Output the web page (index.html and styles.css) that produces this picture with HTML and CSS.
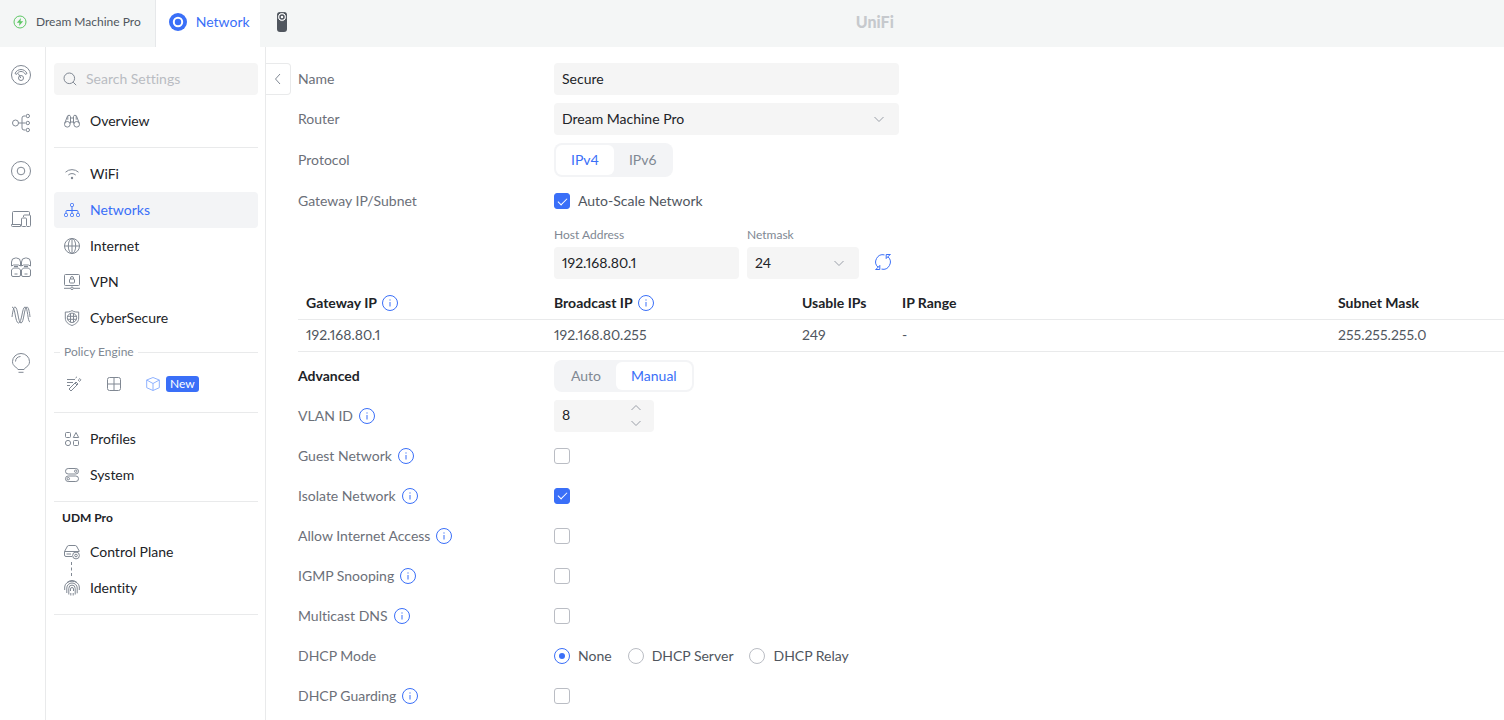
FILE: index.html
```
<!DOCTYPE html>
<html lang="en">
  <head>
    <meta charset="utf-8">
    <title>UniFi Network</title>
    <link rel="stylesheet" href="styles.css">
  </head>
  <body>
    <svg class="sprite" aria-hidden="true">
      <symbol id="info" viewBox="0 0 16 16">
        <circle cx="8" cy="8" r="7.5"/>
        <path d="M8 7v4.5M8 4.4v1.2"/>
      </symbol>
      <symbol id="chevron" viewBox="0 0 12 12">
        <path d="M1.5 4 6 8.5 10.5 4"/>
      </symbol>
    </svg>

    <header class="topbar">
      <a class="tab" href="#">
        <svg class="tab-status" viewBox="0 0 14 14">
          <circle cx="7" cy="7" r="6"/>
          <path class="solid" d="M8 3 3.8 7.7h2.7L6 11l4.2-4.700H7.5z"/>
        </svg>
        Dream Machine Pro
      </a>
      <a class="tab tab-active" href="#">
        <svg class="tab-network" viewBox="0 0 18 18">
          <circle class="disc" cx="9" cy="9" r="9"/>
          <circle class="ring" cx="9" cy="9" r="4.2"/>
        </svg>
        Network
      </a>
      <a class="tab tab-protect" href="#" aria-label="Protect">
        <svg class="camera" viewBox="0 0 10 20">
          <rect width="10" height="20" rx="3"/>
          <circle class="lens" cx="5" cy="5" r="4.4"/>
          <circle class="lens-ring" cx="5" cy="5" r="2"/>
        </svg>
      </a>
      <div class="brand">UniFi</div>
    </header>

    <div class="layout">
      <nav class="rail">
        <a href="#" aria-label="Dashboard">
          <svg viewBox="0 0 20 20">
            <circle cx="10" cy="10" r="9.5"/>
            <path d="M4 8.500c2.300-5.300 9.700-5.300 12 0l-1.600.9c-1.900-3.900-6.900-3.900-8.800 0z"/>
            <circle cx="10" cy="13" r="2.500"/>
            <path d="M9.800 13 7.200 8.500"/>
          </svg>
        </a>
        <a href="#" aria-label="Topology">
          <svg viewBox="0 0 20 20">
            <circle cx="4.5" cy="10" r="3"/>
            <path d="M7.500 10h7M14.500 3H13a2 2 0 0 0-2 2v10a2 2 0 0 0 2 2h1.500"/>
            <circle cx="16.800" cy="3" r="1.700"/>
            <circle cx="16.800" cy="10" r="1.700"/>
            <circle cx="16.800" cy="17" r="1.700"/>
          </svg>
        </a>
        <a href="#" aria-label="Devices">
          <svg viewBox="0 0 20 20">
            <circle cx="10" cy="10" r="9.5"/>
            <circle cx="10" cy="10" r="3.8"/>
          </svg>
        </a>
        <a href="#" aria-label="Clients">
          <svg viewBox="0 0 20 20">
            <path d="M1.500 15V3.500a1 1 0 0 1 1-1h15a1 1 0 0 1 1 1V6M.5 15.500h9v2h-8a1 1 0 0 1-1-1zM12.500 8V7a1 1 0 0 1 1-1h5a1 1 0 0 1 1 1v9.500a1 1 0 0 1-1 1H16"/>
            <rect x="10.5" y="9" width="5" height="8.5" rx="1"/>
          </svg>
        </a>
        <a href="#" aria-label="Ports">
          <svg viewBox="0 0 20 20">
            <path d="M.5 9V5a4 4 0 0 1 4-4h1a4 4 0 0 1 4 4v4L7.500 8h-5zM10.500 9V5a4 4 0 0 1 4-4h1a4 4 0 0 1 4 4v4l-2-1h-5zM.5 18V13l2-2h5l2 2v5a1.500 1.500 0 0 1-1.500 1.500H2A1.500 1.500 0 0 1 .5 18zM10.500 18v-5l2-2h5l2 2v5a1.500 1.500 0 0 1-1.500 1.500h-6a1.500 1.500 0 0 1-1.500-1.500z"/>
            <path d="M3 9.500h4M13 9.500h4M3.500 17h3M13.500 17h3"/>
          </svg>
        </a>
        <a href="#" aria-label="Radios">
          <svg viewBox="0 0 20 20">
            <path d="M1 12C2 4 3 2 4 2c3 0 3 16 6 16s3-16 6-16c1.500 0 2.500 5 3 10"/>
            <path d="M1 2c3.500 0 3 16 6.500 16S11 2 14 2s2.500 15 5 15"/>
          </svg>
        </a>
        <a href="#" aria-label="Insights">
          <svg viewBox="0 0 20 20">
            <path d="M7 16.500C6.500 14.500 1.500 13.500 1.500 8.700a8.500 8.200 0 0 1 17 0c0 4.800-5 5.800-5.500 7.800zM7.500 19.300h5M4.500 8.500A5.500 5.300 0 0 1 9.500 3.500"/>
          </svg>
        </a>
      </nav>

      <aside class="sidebar">
        <label class="search">
          <svg viewBox="0 0 14 14">
            <circle cx="6.300" cy="6.300" r="5.300"/>
            <path d="m10.200 10.200 3 3"/>
          </svg>
          <input type="search" placeholder="Search Settings" aria-label="Search Settings">
        </label>

        <nav class="menu">
          <a class="menu-item" href="#">
            <svg viewBox="0 0 16 16">
              <circle cx="3.300" cy="11.300" r="2.800"/>
              <circle cx="12.700" cy="11.300" r="2.800"/>
              <path d="M.7 10.300 3.300 3.600C3.700 1.800 6.500 1.800 6.500 3.600v6.900M15.300 10.300 12.700 3.600c-.4-1.800-3.200-1.800-3.200 0v6.900M6.500 5h3M6.500 9h3M3.800 2.700v4M12.200 2.700v4"/>
            </svg>
            Overview
          </a>
        </nav>
        <hr>
        <nav class="menu">
          <a class="menu-item" href="#">
            <svg viewBox="0 0 16 16">
              <path d="M1.500 6.200a9.500 9.500 0 0 1 13 0M4.300 9a5.500 5.500 0 0 1 7.400 0"/>
              <circle class="solid" cx="8" cy="12" r="1.200"/>
            </svg>
            WiFi
          </a>
          <a class="menu-item menu-item-active" href="#">
            <svg viewBox="0 0 16 16">
              <rect x="6.500" y="1.500" width="3" height="3" rx="1"/>
              <rect x=".5" y="11.500" width="3" height="3" rx="1"/>
              <rect x="6.500" y="11.500" width="3" height="3" rx="1"/>
              <rect x="12.500" y="11.500" width="3" height="3" rx="1"/>
              <path d="M8 4.500v7M2 11.500v-2a1 1 0 0 1 1-1h10a1 1 0 0 1 1 1v2"/>
            </svg>
            Networks
          </a>
          <a class="menu-item" href="#">
            <svg viewBox="0 0 16 16">
              <circle cx="8" cy="8" r="7.5"/>
              <ellipse cx="8" cy="8" rx="3.700" ry="7.500"/>
              <path d="M8 .5v15M.5 8h15"/>
            </svg>
            Internet
          </a>
          <a class="menu-item" href="#">
            <svg viewBox="0 0 16 16">
              <rect x=".5" y=".5" width="15" height="11" rx="1"/>
              <rect x="5.500" y="5" width="5" height="4" rx="1"/>
              <path d="M6.500 5V4a1.500 1.500 0 0 1 3 0v1M0 14.300h6.500M9.500 14.300H16"/>
              <circle cx="8" cy="14.300" r="1.300"/>
            </svg>
            VPN
          </a>
          <a class="menu-item" href="#">
            <svg viewBox="0 0 16 16">
              <path d="M8 .6c2 1.300 4.500 1.700 6.700 1.400V8c0 4-3 6.200-6.700 7.500C4.300 14.200 1.300 12 1.300 8V2C3.500 2.300 6 1.900 8 .6z"/>
              <circle cx="8" cy="7.800" r="4.700"/>
              <path d="M6.500 3.300v9M9.500 3.300v9M3.500 6.300h9M3.500 9.300h9"/>
            </svg>
            CyberSecure
          </a>
        </nav>

        <section class="policy">
          <h2 class="policy-title">Policy Engine</h2>
          <div class="policy-links">
            <a href="#" aria-label="Rules">
              <svg viewBox="0 0 16 16">
                <path d="M1 3.500h8M1 6.500h6M1 9.500h3M3 13l7-7 2 2-7 7zM9 7l2 2M9.500 2 11 .8M12.200 4.200l1.600-1.600 1.200 1.200-1.600 1.600z"/>
              </svg>
            </a>
            <a href="#" aria-label="Zones">
              <svg viewBox="0 0 16 16">
                <rect x="1.500" y="1.500" width="13" height="13" rx="2"/>
                <path d="M8 1.500v13M1.500 8h13"/>
              </svg>
            </a>
            <a class="policy-objects" href="#">
              <svg viewBox="1 1 14 14">
                <path d="M8 1.500 14.300 4v7.700L8 14.500l-6.300-2.800V4zM1.700 4 8 7.500 14.300 4M8 7.500v7"/>
              </svg>
              <span class="badge">New</span>
            </a>
          </div>
        </section>
        <hr>
        <nav class="menu">
          <a class="menu-item" href="#">
            <svg viewBox="0 0 16 16">
              <rect x="1.500" y="1.500" width="5" height="5" rx="1"/>
              <path d="m12 1.500 2.700 5H9.300z"/>
              <circle cx="4" cy="12" r="2.600"/>
              <rect x="9.500" y="9.500" width="5" height="5" rx="1"/>
            </svg>
            Profiles
          </a>
          <a class="menu-item" href="#">
            <svg viewBox="0 0 16 16">
              <rect x="1.500" y="1.500" width="13" height="5.500" rx="2.700"/>
              <rect x="1.500" y="9" width="13" height="5.500" rx="2.700"/>
              <circle cx="11.700" cy="4.200" r="1.200"/>
              <circle cx="4.300" cy="11.700" r="1.200"/>
            </svg>
            System
          </a>
        </nav>
        <hr>
        <h2 class="console-title">UDM Pro</h2>
        <nav class="menu menu-linked">
          <a class="menu-item" href="#">
            <svg viewBox="0 0 16 16">
              <path d="M8 12.500H2A1.500 1.500 0 0 1 .5 11V7.500L3 3a2 2 0 0 1 1.700-1.500h6.600A2 2 0 0 1 13 3l2.500 4.500M.5 7.500H15M2.500 10H7"/>
              <circle cx="12" cy="11.500" r="3.400"/>
              <circle cx="12" cy="11.500" r="1.300"/>
            </svg>
            Control Plane
          </a>
          <a class="menu-item" href="#">
            <svg viewBox="0 0 16 16">
              <path d="M3 2.500a8 8 0 0 1 10 0M.7 10V7A7.300 5.800 0 0 1 15.300 7v3M2.800 13V8a5.200 5 0 0 1 10.400 0v5.300M4.800 14.500V8.500a3.200 3.400 0 0 1 6.400 0v6M6.800 15.500V13M9.200 15.500V13M6.500 11V9a1.500 1.500 0 0 1 3 0v2"/>
            </svg>
            Identity
          </a>
        </nav>
        <hr>
      </aside>

      <main class="content">
        <button class="collapse" type="button" aria-label="Collapse menu">
          <svg viewBox="0 0 12 12"><path d="M8 1 3.500 6 8 11"/></svg>
        </button>

        <form class="settings">
          <div class="row">
            <label class="row-label" for="name">Name</label>
            <input class="field field-wide" id="name" type="text" value="Secure">
          </div>
          <div class="row">
            <label class="row-label" for="router">Router</label>
            <div class="select field-wide">
              <select class="field" id="router">
                <option>Dream Machine Pro</option>
              </select>
              <svg class="chevron"><use href="#chevron"/></svg>
            </div>
          </div>
          <div class="row">
            <span class="row-label">Protocol</span>
            <div class="segmented segmented-tall">
              <button class="segment segment-active" type="button">IPv4</button>
              <button class="segment" type="button">IPv6</button>
            </div>
          </div>
          <div class="row">
            <span class="row-label">Gateway IP/Subnet</span>
            <label class="choice">
              <input type="checkbox" checked>
              Auto-Scale Network
            </label>
          </div>
          <div class="subnet">
            <div class="subnet-host">
              <label class="caption" for="host">Host Address</label>
              <input class="field" id="host" type="text" value="192.168.80.1">
            </div>
            <div class="subnet-mask">
              <label class="caption" for="netmask">Netmask</label>
              <div class="select">
                <select class="field" id="netmask">
                  <option>24</option>
                </select>
                <svg class="chevron"><use href="#chevron"/></svg>
              </div>
            </div>
            <button class="refresh" type="button" aria-label="Refresh">
              <svg viewBox="0 0 16 16">
                <path d="M9.500.9A7.200 7.200 0 0 0 3 13.200M.5 15.500h4.300v-4.300M4.500 11.800.8 15.500M6.500 15.100A7.200 7.200 0 0 0 13 2.800M15.500.5h-4.300v4.300M11.500 4.200 15.200.5"/>
              </svg>
            </button>
          </div>

          <table class="summary">
            <thead>
              <tr>
                <th class="col-ip">Gateway IP <svg class="info"><use href="#info"/></svg></th>
                <th class="col-ip">Broadcast IP <svg class="info"><use href="#info"/></svg></th>
                <th class="col-usable">Usable IPs</th>
                <th>IP Range</th>
                <th class="col-mask">Subnet Mask</th>
              </tr>
            </thead>
            <tbody>
              <tr>
                <td>192.168.80.1</td>
                <td>192.168.80.255</td>
                <td>249</td>
                <td>-</td>
                <td>255.255.255.0</td>
              </tr>
            </tbody>
          </table>

          <div class="row">
            <span class="row-label row-title">Advanced</span>
            <div class="segmented">
              <button class="segment" type="button">Auto</button>
              <button class="segment segment-active" type="button">Manual</button>
            </div>
          </div>
          <div class="row">
            <label class="row-label" for="vlan">VLAN ID <svg class="info"><use href="#info"/></svg></label>
            <div class="stepper">
              <input class="field" id="vlan" type="number" value="8">
              <div class="stepper-buttons">
                <button type="button" aria-label="Increase"><svg class="chevron chevron-up"><use href="#chevron"/></svg></button>
                <button type="button" aria-label="Decrease"><svg class="chevron"><use href="#chevron"/></svg></button>
              </div>
            </div>
          </div>
          <div class="row">
            <label class="row-label" for="guest">Guest Network <svg class="info"><use href="#info"/></svg></label>
            <input id="guest" type="checkbox">
          </div>
          <div class="row">
            <label class="row-label" for="isolate">Isolate Network <svg class="info"><use href="#info"/></svg></label>
            <input id="isolate" type="checkbox" checked>
          </div>
          <div class="row">
            <label class="row-label" for="internet">Allow Internet Access <svg class="info"><use href="#info"/></svg></label>
            <input id="internet" type="checkbox">
          </div>
          <div class="row">
            <label class="row-label" for="igmp">IGMP Snooping <svg class="info"><use href="#info"/></svg></label>
            <input id="igmp" type="checkbox">
          </div>
          <div class="row">
            <label class="row-label" for="mdns">Multicast DNS <svg class="info"><use href="#info"/></svg></label>
            <input id="mdns" type="checkbox">
          </div>
          <div class="row">
            <span class="row-label">DHCP Mode</span>
            <div class="choices">
              <label class="choice"><input type="radio" name="dhcp" checked> None</label>
              <label class="choice"><input type="radio" name="dhcp"> DHCP Server</label>
              <label class="choice"><input type="radio" name="dhcp"> DHCP Relay</label>
            </div>
          </div>
          <div class="row">
            <label class="row-label" for="guarding">DHCP Guarding <svg class="info"><use href="#info"/></svg></label>
            <input id="guarding" type="checkbox">
          </div>
        </form>
      </main>
    </div>
  </body>
</html>
```
FILE: styles.css
```
* {
  box-sizing: border-box;
}
body {
  margin: 0;
  min-height: 100vh;
  display: flex;
  flex-direction: column;
  font-family: Lato, "Liberation Sans", sans-serif;
  font-size: 14px;
  font-variant-ligatures: none;
  font-variant-numeric: proportional-nums;
  line-height: 20px;
  color: #212327;
  background-color: white;
}
a {
  color: inherit;
  text-decoration: none;
}
button,
input,
select {
  font: inherit;
  color: inherit;
  margin: 0;
}
button {
  padding: 0;
  border: none;
  background: none;
}
svg {
  display: block;
  flex-shrink: 0;
  fill: none;
  stroke: #808893;
}
svg .solid {
  fill: currentColor;
  stroke: none;
}
.sprite {
  position: absolute;
  width: 0;
  height: 0;
}
hr {
  width: 100%;
  margin: 8px 0;
  border: none;
  border-top: 1px solid #e9eaeb;
}

/* top bar */
.topbar {
  display: flex;
  height: 47px;
  padding-right: 58px;
  background-color: #f4f6f6;
}
.tab {
  display: flex;
  align-items: center;
  gap: 9px;
  padding: 0 14px 3px 13px;
  font-size: 12px;
  color: #50565e;
  border-right: 1px solid #e6e8ea;
}
.tab-active {
  padding: 0 10px 3px 13px;
  font-size: 14px;
  color: #3a6ff8;
  background-color: white;
  border-right: none;
}
.tab-protect {
  padding: 0 17px 3px;
  border-right: none;
}
.tab-status {
  width: 14px;
  height: 14px;
  color: #5cc763;
  stroke: #5cc763;
}
.tab-network {
  width: 18px;
  height: 18px;
}
.disc {
  fill: #3a6ff8;
  stroke: none;
}
.ring {
  stroke: white;
  stroke-width: 2;
}
.camera {
  width: 10px;
  height: 20px;
  fill: #50565e;
  stroke: none;
}
.lens {
  fill: white;
  stroke: #50565e;
}
.lens-ring {
  fill: white;
  stroke: #50565e;
  stroke-width: 1.5;
}
.brand {
  flex: 1;
  padding-bottom: 3px;
  font-size: 16px;
  font-weight: 900;
  line-height: 44px;
  text-align: center;
  color: #c6c9cd;
}

.layout {
  flex: 1;
  display: flex;
}

/* icon rail */
.rail {
  display: flex;
  flex-direction: column;
  align-items: center;
  gap: 28px;
  flex: 0 0 46px;
  padding: 18px 3px 0 0;
  border-right: 1px solid #e9eaeb;
}
.rail svg {
  width: 20px;
  height: 20px;
}

/* settings sidebar */
.sidebar {
  flex: none;
  width: 220px;
  padding: 16px 7px 0 8px;
  border-right: 1px solid #e9eaeb;
}
.search {
  display: flex;
  align-items: center;
  gap: 9px;
  height: 32px;
  margin-bottom: 8px;
  padding: 0 9px;
  border-radius: 4px;
  background-color: #f5f5f5;
}
.search svg {
  width: 14px;
  height: 14px;
}
.search input {
  min-width: 0;
  flex: 1;
  padding: 0;
  border: none;
  outline: none;
  background: none;
}
.search input::placeholder {
  color: #b9bcc2;
}
.menu-item {
  display: flex;
  align-items: center;
  gap: 10px;
  height: 36px;
  padding: 0 10px;
  border-radius: 4px;
}
.menu-item svg {
  width: 16px;
  height: 16px;
}
.menu-item-active {
  color: #3a6ff8;
  background-color: #f3f4f6;
}
.menu-item-active svg {
  stroke: #3a6ff8;
}
.menu-item .solid {
  color: #808893;
}
.policy-title {
  display: flex;
  align-items: center;
  gap: 4px;
  margin: 8px 0 12px;
  font-size: 12px;
  font-weight: 400;
  line-height: 16px;
  color: #808893;
}
.policy-title::before,
.policy-title::after {
  content: "";
  width: 6px;
  border-top: 1px solid #e9eaeb;
}
.policy-title::after {
  flex: 1;
}
.policy-links {
  display: flex;
  align-items: center;
  gap: 24px;
  height: 24px;
  padding: 0 12px;
  margin-bottom: 16px;
}
.policy-links svg {
  width: 16px;
  height: 16px;
}
.policy-objects {
  display: flex;
  align-items: center;
  gap: 6px;
}
.policy-links .policy-objects svg {
  width: 14px;
  height: 14px;
  stroke: #8fb2ff;
}
.badge {
  padding: 0 4px;
  border-radius: 3px;
  font-size: 12px;
  line-height: 16px;
  color: white;
  background-color: #3a6ff8;
}
.console-title {
  margin: 0 0 8px;
  padding: 0 8px;
  font-size: 12px;
  line-height: 16px;
}
.menu-linked {
  position: relative;
}
.menu-linked::after {
  content: "";
  position: absolute;
  top: 28px;
  left: 17px;
  height: 14px;
  border-left: 1px dashed #808893;
}

/* network form */
.content {
  flex: 1;
  min-width: 0;
  display: flex;
  align-items: flex-start;
  gap: 7px;
  padding: 16px 0 8px;
}
.collapse {
  display: flex;
  align-items: center;
  justify-content: center;
  flex: 0 0 25px;
  height: 32px;
  border: 1px solid #e9eaeb;
  border-left: none;
  border-radius: 0 4px 4px 0;
}
.collapse svg {
  width: 12px;
  height: 12px;
}
.settings {
  flex: 1;
  min-width: 0;
  display: flex;
  flex-direction: column;
  gap: 8px;
}
.row {
  display: flex;
  align-items: center;
  min-height: 32px;
}
.row-label {
  display: flex;
  align-items: center;
  gap: 6px;
  flex: 0 0 256px;
  color: #6c7079;
}
.row-title {
  font-weight: 700;
  color: #212327;
}
.info {
  width: 16px;
  height: 16px;
  stroke: #3a6ff8;
}
.field {
  width: 100%;
  height: 32px;
  padding: 0 8px;
  border: none;
  border-radius: 4px;
  outline: none;
  background-color: #f5f5f5;
  appearance: none;
}
input.field {
  padding-bottom: 2px;
}
.field-wide {
  width: 345px;
}
.select {
  position: relative;
}
.chevron {
  width: 12px;
  height: 12px;
  stroke: #9a9fa8;
}
.select .chevron {
  position: absolute;
  top: 10px;
  right: 14px;
  pointer-events: none;
}
.segmented {
  display: flex;
  height: 32px;
  padding: 2px;
  border-radius: 8px;
  background-color: #f3f4f6;
}
.segmented-tall {
  height: 34px;
}
.segment {
  padding: 0 15px;
  border-radius: 6px;
  color: #808893;
}
.segment-active {
  color: #3a6ff8;
  background-color: white;
}
.choices {
  display: flex;
  gap: 16px;
}
.choice {
  display: flex;
  align-items: center;
  gap: 8px;
  color: #50565e;
}
input[type="checkbox"],
input[type="radio"] {
  display: grid;
  place-items: center;
  width: 16px;
  height: 16px;
  border: 1px solid #babdc4;
  border-radius: 3px;
  background-color: white;
  appearance: none;
}
input[type="checkbox"]:checked {
  border-color: #3a6ff8;
  background-color: #3a6ff8;
}
input[type="checkbox"]:checked::before {
  content: "";
  width: 8px;
  height: 4px;
  margin-bottom: 2px;
  border: solid white;
  border-width: 0 0 1px 1px;
  transform: rotate(-45deg);
}
input[type="radio"] {
  border-radius: 50%;
}
input[type="radio"]:checked {
  border-color: #3a6ff8;
}
input[type="radio"]:checked::before {
  content: "";
  width: 6px;
  height: 6px;
  border-radius: 50%;
  background-color: #3a6ff8;
}
.subnet {
  display: flex;
  align-items: flex-end;
  gap: 8px;
  padding-left: 256px;
}
.subnet-host {
  width: 185px;
}
.subnet-mask {
  width: 112px;
}
.caption {
  display: block;
  margin-bottom: 2px;
  font-size: 12px;
  color: #808893;
}
.refresh {
  display: flex;
  align-items: center;
  height: 34px;
  margin-left: 8px;
}
.refresh svg {
  width: 16px;
  height: 16px;
  stroke: #3a6ff8;
}
.summary {
  width: 100%;
  table-layout: fixed;
  border-collapse: collapse;
  text-align: left;
  color: #50565e;
}
.summary th,
.summary td {
  height: 32px;
  padding: 0 8px;
  border-bottom: 1px solid #e9eaeb;
}
.summary th {
  font-weight: 700;
  color: #212327;
}
.summary .info {
  display: inline-block;
  margin-left: 2px;
  vertical-align: -3px;
}
.col-ip {
  width: 248px;
}
.col-usable {
  width: 100px;
}
.col-mask {
  width: 174px;
}
.stepper {
  display: flex;
  width: 100px;
  border-radius: 4px;
  background-color: #f5f5f5;
}
.stepper .field {
  flex: 1;
  min-width: 0;
  appearance: textfield;
}
.stepper-buttons {
  display: flex;
  flex-direction: column;
  justify-content: center;
  gap: 3px;
  padding-right: 12px;
}
.chevron-up {
  transform: rotate(180deg);
}
```
